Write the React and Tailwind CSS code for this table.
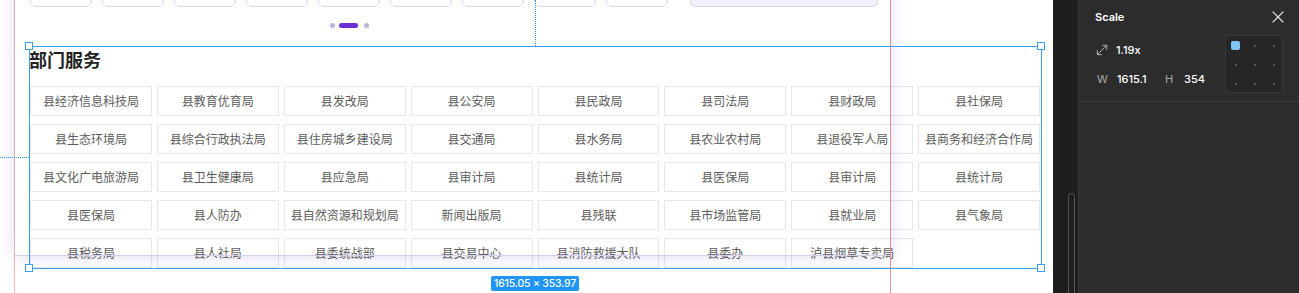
import React from "react";
import { X, MoveDiagonal } from "lucide-react";

const items = [
  "县经济信息科技局","县教育优育局","县发改局","县公安局","县民政局","县司法局","县财政局","县社保局",
  "县生态环境局","县综合行政执法局","县住房城乡建设局","县交通局","县水务局","县农业农村局","县退役军人局","县商务和经济合作局",
  "县文化广电旅游局","县卫生健康局","县应急局","县审计局","县统计局","县医保局","县审计局","县统计局",
  "县医保局","县人防办","县自然资源和规划局","新闻出版局","县残联","县市场监管局","县就业局","县气象局",
  "县税务局","县人社局","县委统战部","县交易中心","县消防救援大队","县委办","泸县烟草专卖局",
];

const cjk = { fontFamily: '"Noto Sans CJK SC", "Noto Sans", sans-serif' };
const ui = { fontFamily: 'Inter, "Noto Sans", sans-serif' };

function Handle({ className }) {
  return <div className={`absolute w-[8px] h-[8px] bg-white border border-[#3a9ff0] ${className}`} />;
}

export default function App() {
  return (
    <div className="flex w-[1299px] h-[293px] overflow-hidden bg-white">
      {/* canvas */}
      <div className="relative w-[1053px] h-full bg-white overflow-hidden" style={cjk}>
        <div className="absolute left-[14px] top-0 w-px h-full bg-[#f2b9ae]" />
        {/* content */}
        <div className="relative flex flex-col pl-[30px]">
          <div className="flex items-start mt-[-23px]">
            {Array.from({ length: 9 }).map((_, i) => (
              <div key={i} className="w-[62px] h-[30px] mr-[10px] rounded-[6px] border border-[#d9d4ef] bg-white" />
            ))}
            <div className="ml-[12px] w-[188px] h-[30px] rounded-[6px] border border-[#d9d4ef] bg-[#f4f1fc]" />
          </div>
          <div className="flex items-center h-[4px] mt-[16px] ml-[300px]">
            <div className="w-[5px] h-[5px] rounded-full bg-[#bcb2e2]" />
            <div className="w-[19px] h-[5px] rounded-full bg-[#6b2fd3] ml-[4px]" />
            <div className="w-[5px] h-[5px] rounded-full bg-[#bcb2e2] ml-[6px]" />
          </div>
          <div className="mt-[20px] ml-[-1px] h-[24px] leading-[24px] text-[18px] font-bold text-[#222]">部门服务</div>
          <div className="mt-[15px] grid grid-cols-8 gap-x-[5px] gap-y-[8px] w-[1010px]">
            {items.map((t, i) => (
              <div key={i} className="h-[30px] flex items-center justify-center border border-[#e7e7e7] bg-white text-[12px] text-[#5c5c5c] whitespace-nowrap">
                {t}
              </div>
            ))}
          </div>
        </div>

        {/* frame overlay shadow */}
        <div className="absolute left-[14px] top-[-20px] w-[876px] h-[276px] border-b border-[#d8cef0] shadow-[0_0_16px_rgba(130,90,210,0.24)] pointer-events-none" />
        <div className="absolute left-[14px] top-0 w-px h-[256px] bg-[#e2adb8]" />
        <div className="absolute left-[890px] top-0 w-px h-full bg-[#ec9191]" />

        {/* dotted measurement lines */}
        <div className="absolute left-[535px] top-0 h-[46px] border-l border-dotted border-[#2f95ee]" />
        <div className="absolute left-0 top-[157px] w-[29px] border-t border-dotted border-[#2f95ee]" />

        {/* selection */}
        <div className="absolute left-[29px] top-[46px] w-[1013px] h-[223px] border-[1.5px] border-[#3a9ff0] pointer-events-none" />
        <Handle className="left-[25px] top-[42px]" />
        <Handle className="left-[1037px] top-[42px]" />
        <Handle className="left-[25px] top-[264px]" />
        <Handle className="left-[1037px] top-[264px]" />
        <div className="absolute left-[491px] top-[276px] w-[88px] h-[15px] rounded-[2px] bg-[#1f95f5] text-white text-[10.5px] leading-[15px] font-medium flex items-center justify-center whitespace-nowrap tracking-[-0.2px]" style={ui}>
          1615.05 × 353.97
        </div>
      </div>

      {/* dark strip */}
      <div className="relative w-[26px] h-full bg-[#1e1e1e] border-r border-[#383838]">
        <div className="absolute left-[15px] top-[193px] w-[7px] h-[120px] rounded-[4px] border border-[#555]" />
      </div>

      {/* panel */}
      <div className="flex-1 h-full bg-[#2c2c2c] text-white" style={ui}>
        <div className="h-[102px] border-b border-[#3a3a3a] pl-[16px] pr-[16px]">
          <div className="flex items-center justify-between h-[34px]">
            <span className="text-[11px] font-semibold">Scale</span>
            <X size={20} strokeWidth={1.3} className="text-[#e0e0e0] mr-[-5px]" />
          </div>
          <div className="flex">
            <div className="flex flex-col w-[130px]">
              <div className="flex items-center h-[30px] pt-[2px]">
                <MoveDiagonal size={16} strokeWidth={1.5} className="text-[#b0b0b0] ml-[-1px]" />
                <span className="ml-[6px] text-[11px] font-medium">1.19x</span>
              </div>
              <div className="flex items-center h-[30px]">
                <span className="ml-[2px] w-[20px] text-[11px] text-[#aaa]">W</span>
                <span className="text-[11px] font-medium w-[48px]">1615.1</span>
                <span className="text-[11px] text-[#aaa] w-[19px]">H</span>
                <span className="text-[11px] font-medium">354</span>
              </div>
            </div>
            <div className="mt-[1px] w-[58px] h-[58px] border border-[#383838] rounded-[2px] bg-[#262626] grid grid-cols-[19px_19px_19px] grid-rows-[19px_19px_19px]">
              {Array.from({ length: 9 }).map((_, i) => (
                <div key={i} className="flex items-center justify-center">
                  {i === 0 ? (
                    <div className="w-[9px] h-[9px] rounded-[2px] bg-[#7cc4fa]" />
                  ) : (
                    <div className="w-[2px] h-[2px] rounded-full bg-[#6a6a6a]" />
                  )}
                </div>
              ))}
            </div>
          </div>
        </div>
      </div>
    </div>
  );
}
